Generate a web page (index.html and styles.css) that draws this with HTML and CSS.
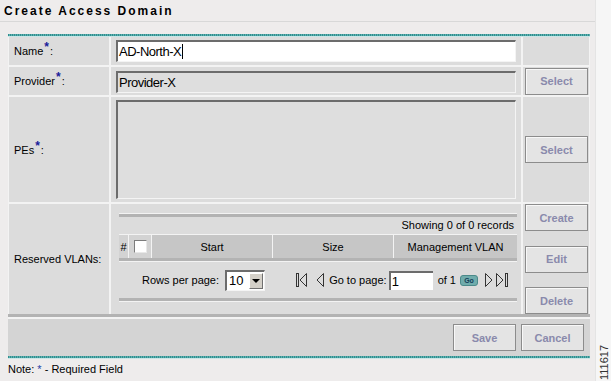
FILE: index.html
```html
<!DOCTYPE html>
<html lang="en">
<head>
    <meta charset="UTF-8">
    <title>Create Access Domain</title>
    <link rel="stylesheet" href="styles.css">
</head>
<body>
    <div class="page">
        <h1 class="title">Create Access Domain</h1>
        <div class="form">
            <div class="rule"></div>
            <div class="grid">
                <div class="label">Name<span class="req">*</span>:</div>
                <div class="field"><div class="text">AD-North-X<span class="caret"></span></div></div>
                <div class="actions"></div>

                <div class="label">Provider<span class="req">*</span>:</div>
                <div class="field"><div class="text readonly">Provider-X</div></div>
                <div class="actions"><button class="btn">Select</button></div>

                <div class="label">PEs<span class="req">*</span>:</div>
                <div class="field field-top"><div class="listbox"></div></div>
                <div class="actions"><button class="btn">Select</button></div>

                <div class="label">Reserved VLANs:</div>
                <div class="field field-vlan">
                    <div class="vlans">
                        <div class="vlans-count">Showing 0 of 0 records</div>
                        <div class="vlans-head">
                            <div class="col-light">#</div>
                            <div class="col-light"><span class="checkbox"></span></div>
                            <div>Start</div>
                            <div>Size</div>
                            <div>Management VLAN</div>
                        </div>
                        <div class="pager">
                            <div class="pager-rows">
                                Rows per page:
                                <span class="select">10<span class="select-arrow"></span></span>
                            </div>
                            <div class="pager-nav">
                                <svg class="nav-first" width="11" height="14" viewBox="0 0 11 14"><rect x="0.5" y="0.5" width="2" height="13" fill="none" stroke="#333"/><path d="M10.5 0.5 L4 7 L10.5 13.5 Z" fill="none" stroke="#333"/></svg>
                                <svg class="nav-prev" width="8" height="14" viewBox="0 0 8 14"><path d="M7.5 0.5 L1 7 L7.5 13.5 Z" fill="none" stroke="#333"/></svg>
                                <span class="nav-label">Go to page:</span>
                                <span class="page-input">1</span>
                                <span class="nav-of">of 1</span>
                                <span class="go">Go</span>
                                <svg class="nav-next" width="8" height="14" viewBox="0 0 8 14"><path d="M0.5 0.5 L7 7 L0.5 13.5 Z" fill="none" stroke="#333"/></svg>
                                <svg class="nav-last" width="13" height="14" viewBox="0 0 13 14"><path d="M0.5 0.5 L7 7 L0.5 13.5 Z" fill="none" stroke="#333"/><rect x="9.5" y="0.5" width="2" height="13" fill="none" stroke="#333"/></svg>
                            </div>
                        </div>
                    </div>
                </div>
                <div class="actions actions-stack">
                    <button class="btn">Create</button>
                    <button class="btn">Edit</button>
                    <button class="btn">Delete</button>
                </div>
            </div>
            <div class="bar">
                <button class="btn">Save</button>
                <button class="btn">Cancel</button>
            </div>
            <div class="rule"></div>
        </div>
        <div class="note">Note: <span class="note-req">*</span> - Required Field</div>
    </div>
    <div class="fig">111617</div>
</body>
</html>
```

FILE: styles.css
```css
body {
    margin: 0;
    background-color: #f6f6f6;
    font-family: "Liberation Sans", Arial, sans-serif;
    font-size: 11px;
    color: #000;
    position: relative;
    height: 381px;
    overflow: hidden;
}
.page {
    width: 596px;
    height: 381px;
    box-sizing: border-box;
    background-color: #eeecec;
    border-right: 1px solid #e4e4e4;
}
.title {
    margin: 0;
    padding: 4px 0 0 4px;
    height: 17px;
    font-size: 12px;
    line-height: 14px;
    font-weight: bold;
    letter-spacing: 2px;
    border-bottom: 1px solid #d8d8d8;
}
.form {
    margin: 12px 0 0 8px;
    width: 582px;
}
.rule {
    height: 3px;
    background:
        linear-gradient(#c8e6e6, #c8e6e6) bottom / 100% 1px no-repeat,
        repeating-linear-gradient(90deg, #2f8f8f 0 1px, #5fb0b0 1px 2px);
}
.grid {
    display: grid;
    grid-template-columns: 100px 410px 66px;
    grid-template-rows: 28px 28px 105px 110px;
    gap: 2px;
    padding: 0 1px;
    background-color: #f3f3f3;
}
.label, .field, .actions {
    background-color: #dcdcdc;
    display: flex;
    align-items: center;
}
.label {
    padding-left: 5px;
}
.req {
    color: #1a1a9a;
    font-weight: bold;
    font-size: 12px;
    position: relative;
    top: -4px;
    margin: 0 1px;
}
.field {
    padding-left: 5px;
}
.field-top {
    align-items: flex-start;
    padding-top: 3px;
}
.field-vlan {
    align-items: flex-start;
    padding: 10px 0 0 8px;
}
.actions {
    justify-content: center;
}
.actions-stack {
    flex-direction: column;
    justify-content: space-between;
}
.text {
    width: 400px;
    height: 22px;
    box-sizing: border-box;
    background-color: #fff;
    border-top: 2px solid #6c6c6c;
    border-left: 2px solid #6c6c6c;
    border-right: 1px solid #f4f4f4;
    border-bottom: 1px solid #f4f4f4;
    padding-left: 1px;
    font-size: 13px;
    letter-spacing: -0.5px;
    line-height: 19px;
    display: flex;
    align-items: center;
}
.readonly {
    background-color: #dedede;
    margin-top: 1px;
}
.caret {
    display: inline-block;
    width: 1px;
    height: 15px;
    background-color: #000;
    margin-left: 1px;
}
.listbox {
    width: 400px;
    height: 99px;
    box-sizing: border-box;
    background-color: #dedede;
    border-top: 2px solid #6c6c6c;
    border-left: 2px solid #6c6c6c;
    border-right: 1px solid #f4f4f4;
    border-bottom: 1px solid #f4f4f4;
}
.btn {
    width: 63px;
    height: 27px;
    margin-left: 1px;
    padding: 0;
    background-color: #e4e4e4;
    border: 1px solid #8c8c8c;
    box-shadow: inset 1px 1px 0 #f8f8f8;
    color: #8a8aac;
    font-family: "Liberation Sans", Arial, sans-serif;
    font-size: 11px;
    font-weight: bold;
}
.vlans {
    width: 398px;
    border-top: 3px solid #b3b3b3;
    box-shadow: 0 -1px 0 #f3f3f3;
}
.vlans-count {
    height: 17px;
    line-height: 17px;
    text-align: right;
    padding-right: 3px;
}
.vlans-head {
    display: grid;
    grid-template-columns: 9px 22px 120px 120px 1fr;
    gap: 1px;
    height: 23px;
    background-color: #f3f3f3;
    border-top: 1px solid #f3f3f3;
    border-bottom: 3px solid #b3b3b3;
}
.vlans-head div {
    background-color: #c6c6c6;
    display: flex;
    align-items: center;
    justify-content: center;
}
.vlans-head .col-light {
    background-color: #d3d3d3;
}
.checkbox {
    width: 13px;
    height: 13px;
    box-sizing: border-box;
    background-color: #fff;
    border-top: 1px solid #7c7c7c;
    border-left: 1px solid #7c7c7c;
    border-right: 1px solid #e8e8e8;
    border-bottom: 1px solid #e8e8e8;
}
.pager {
    height: 36px;
    display: flex;
    align-items: center;
    border-top: 1px solid #f3f3f3;
    border-bottom: 3px solid #b3b3b3;
    box-shadow: 0 1px 0 #f3f3f3;
}
.pager-rows {
    padding-left: 23px;
    display: flex;
    align-items: center;
}
.select {
    display: flex;
    align-items: center;
    justify-content: space-between;
    width: 40px;
    height: 21px;
    box-sizing: border-box;
    margin-left: 6px;
    padding: 0 1px 0 2px;
    background-color: #fff;
    border-top: 2px solid #6c6c6c;
    border-left: 2px solid #6c6c6c;
    border-right: 1px solid #f4f4f4;
    border-bottom: 1px solid #f4f4f4;
    font-size: 13px;
}
.select-arrow {
    width: 14px;
    height: 16px;
    box-sizing: border-box;
    background-color: #d4d0c8;
    border: 1px solid;
    border-color: #fff #707070 #707070 #fff;
    display: flex;
    align-items: center;
    justify-content: center;
}
.select-arrow::after {
    content: "";
    border-left: 4px solid transparent;
    border-right: 4px solid transparent;
    border-top: 4px solid #000;
    margin-top: 1px;
}
.pager-nav {
    margin-left: auto;
    padding-right: 8px;
    display: flex;
    align-items: center;
}
.nav-prev {
    margin-left: 9px;
}
.nav-label {
    margin-left: 5px;
}
.page-input {
    width: 44px;
    height: 19px;
    box-sizing: border-box;
    margin-left: 2px;
    padding-left: 1px;
    background-color: #fff;
    border-top: 2px solid #6c6c6c;
    border-left: 2px solid #6c6c6c;
    font-size: 13px;
    line-height: 17px;
}
.nav-of {
    margin-left: 5px;
}
.go {
    width: 18px;
    height: 11px;
    box-sizing: border-box;
    margin-left: 4px;
    background-color: #70acac;
    border: 1px solid #4b8a8a;
    border-radius: 3px;
    color: #123e5a;
    font-size: 7px;
    font-weight: bold;
    line-height: 9px;
    text-align: center;
}
.nav-next {
    margin-left: 7px;
}
.nav-last {
    margin-left: 3px;
}
.bar {
    display: flex;
    justify-content: flex-end;
    gap: 5px;
    padding: 7px 6px 5px 0;
    background-color: #d4d4d4;
    border-top: 3px solid #b3b3b3;
    box-shadow: inset 0 2px 0 #f3f3f3;
}
.bar .btn {
    margin-left: 0;
}
.note {
    margin-top: 4px;
    padding-left: 8px;
    line-height: 13px;
}
.note-req {
    color: #1f3fa8;
}
.fig {
    position: absolute;
    right: 1px;
    bottom: 1px;
    writing-mode: vertical-rl;
    transform: rotate(180deg);
    font-size: 11px;
    color: #333;
}
```
